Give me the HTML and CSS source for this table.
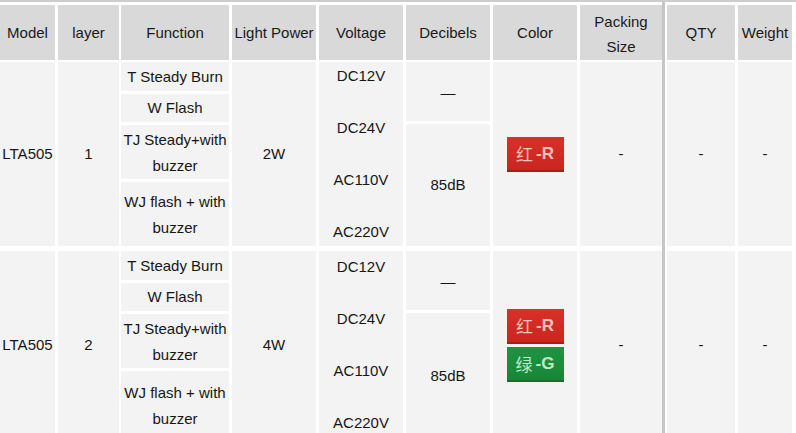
FILE: index.html
```html
<!DOCTYPE html>
<html>
<head>
<meta charset="utf-8">
<link rel="stylesheet" href="styles.css">
</head>
<body>
<div class="sheet">
  <div class="row head">
    <div class="cell c-model">Model</div>
    <div class="cell c-layer">layer</div>
    <div class="cell c-func">Function</div>
    <div class="cell c-power">Light Power</div>
    <div class="cell c-volt">Voltage</div>
    <div class="cell c-db">Decibels</div>
    <div class="cell c-color">Color</div>
    <div class="cell c-pack two">Packing<br>Size</div>
    <div class="cell c-qty">QTY</div>
    <div class="cell c-weight">Weight</div>
  </div>

  <div class="row body r1">
    <div class="cell c-model">LTA505</div>
    <div class="cell c-layer">1</div>
    <div class="stack c-func">
      <div class="cell f1">T Steady Burn</div>
      <div class="cell f2">W Flash</div>
      <div class="cell f3 two">TJ Steady+with<br>buzzer</div>
      <div class="cell f4 two">WJ flash + with<br>buzzer</div>
    </div>
    <div class="cell c-power">2W</div>
    <div class="cell c-volt volts">
      <span>DC12V</span><span>DC24V</span><span>AC110V</span><span>AC220V</span>
    </div>
    <div class="stack c-db">
      <div class="cell db1">—</div>
      <div class="cell db2">85dB</div>
    </div>
    <div class="cell c-color badges">
      <span class="badge red">红<span class="suffix">-R</span></span>
    </div>
    <div class="cell c-pack">-</div>
    <div class="cell c-qty">-</div>
    <div class="cell c-weight">-</div>
  </div>

  <div class="row body r2">
    <div class="cell c-model">LTA505</div>
    <div class="cell c-layer">2</div>
    <div class="stack c-func">
      <div class="cell f1">T Steady Burn</div>
      <div class="cell f2">W Flash</div>
      <div class="cell f3 two">TJ Steady+with<br>buzzer</div>
      <div class="cell f4 two">WJ flash + with<br>buzzer</div>
    </div>
    <div class="cell c-power">4W</div>
    <div class="cell c-volt volts">
      <span>DC12V</span><span>DC24V</span><span>AC110V</span><span>AC220V</span>
    </div>
    <div class="stack c-db">
      <div class="cell db1">—</div>
      <div class="cell db2">85dB</div>
    </div>
    <div class="cell c-color badges">
      <span class="badge red">红<span class="suffix">-R</span></span>
      <span class="badge green">绿<span class="suffix">-G</span></span>
    </div>
    <div class="cell c-pack">-</div>
    <div class="cell c-qty">-</div>
    <div class="cell c-weight">-</div>
  </div>
</div>
</body>
</html>
```

FILE: styles.css
```css
html, body {
  margin: 0;
  padding: 0;
  background: #ffffff;
}

body {
  font-family: "Liberation Sans", Arial, "Noto Sans CJK SC", sans-serif;
  font-size: 15px;
  color: #161616;
}

.sheet {
  width: 796px;
  height: 433px;
  overflow: hidden;
  border-top: 2px solid #cdcdcd;
  padding-top: 3px;
  box-sizing: border-box;
  background: linear-gradient(to right,
    transparent 662px, #c6c6c6 662px, #c6c6c6 665px, transparent 665px);
}

.row {
  display: flex;
  gap: 3px;
}

.head {
  height: 55px;
}

.body.r1 {
  height: 184px;
  margin-top: 2px;
}

.body.r2 {
  height: 188px;
  margin-top: 5px;
}

.cell {
  display: flex;
  align-items: center;
  justify-content: center;
  text-align: center;
  white-space: nowrap;
  line-height: 26px;
  background: #f3f3f3;
  box-sizing: border-box;
}

.head .cell {
  background: #d9d9d9;
  color: #1a1a1a;
}

.head .two {
  line-height: 25px;
  padding-top: 2px;
}

.c-model { width: 55px; }
.c-layer { width: 61px; }
.c-func { width: 108px; margin-left: -1px; }
.c-power { width: 84px; }
.c-volt { width: 84px; }
.c-db { width: 84px; }
.c-color { width: 84px; }
.c-pack { width: 82px; }
.c-qty { width: 68px; margin-left: 2px; }
.c-weight { width: 54px; }

.stack {
  display: flex;
  flex-direction: column;
  gap: 3px;
}

.stack .cell {
  width: 100%;
}

.f1 { height: 29px; }
.f2 { height: 28px; }
.f3 { height: 54px; }
.f4 { flex: 1; }

.f3.two, .f4.two {
  padding-top: 1px;
  line-height: 26px;
}

.db1 { height: 59px; padding-top: 2px; }
.db2 { flex: 1; }

.volts {
  flex-direction: column;
  justify-content: center;
}

.volts span {
  display: block;
  height: 52px;
  line-height: 52px;
  flex-shrink: 0;
}

.badges {
  flex-direction: column;
  gap: 3px;
}

.badge {
  display: flex;
  align-items: center;
  justify-content: center;
  width: 57px;
  height: 35px;
  font-family: "Noto Sans CJK SC", sans-serif;
  font-size: 17px;
  font-weight: normal;
  line-height: 35px;
  padding-bottom: 1px;
  box-sizing: border-box;
}

.suffix {
  font-family: "Liberation Sans", Arial, sans-serif;
  font-size: 17px;
  font-weight: bold;
  margin-left: 3px;
}

.badge.red {
  background: linear-gradient(#d8312a, #c9241e);
  color: #f5c3bb;
  box-shadow: inset 0 -2px 0 #a31e18;
}

.badge.green {
  background: linear-gradient(#1f9443, #178636);
  color: #bfe8c6;
  box-shadow: inset 0 -2px 0 #11702c;
}
```
